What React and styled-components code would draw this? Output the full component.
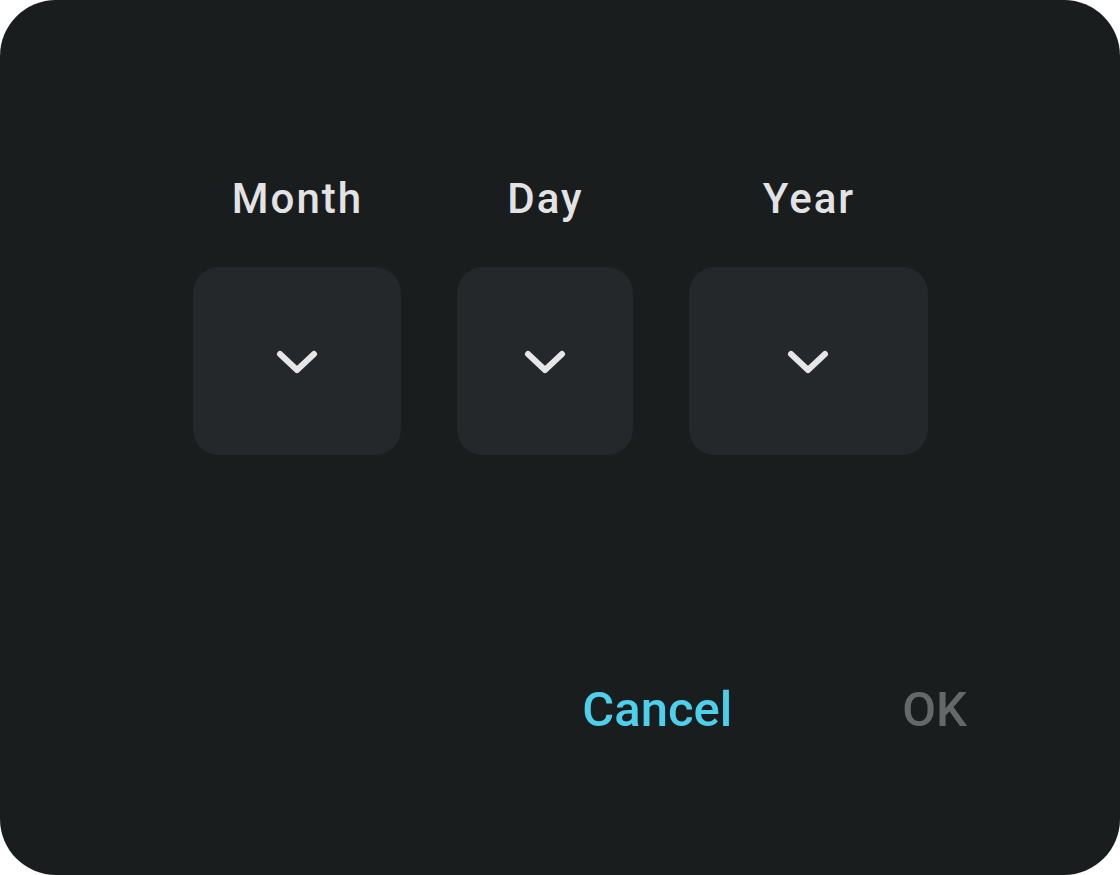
import React from "react";
import styled, { createGlobalStyle } from "styled-components";

const GlobalStyle = createGlobalStyle`
  html, body {
    margin: 0;
    padding: 0;
    background: #ffffff;
  }
  body {
    font-family: Roboto, "Liberation Sans", sans-serif;
  }
`;

const Dialog = styled.div`
  width: 1120px;
  height: 875px;
  box-sizing: border-box;
  background: #1a1d1e;
  border-radius: 56px;
  display: flex;
  flex-direction: column;
  padding-top: 173px;
`;

const Pickers = styled.div`
  display: flex;
  justify-content: center;
  gap: 56px;
`;

const Column = styled.div`
  display: flex;
  flex-direction: column;
  align-items: center;
`;

const Label = styled.div`
  font-size: 42px;
  line-height: 52px;
  font-weight: 500;
  letter-spacing: 2px;
  padding-left: 2px;
  color: #e3e3e5;
`;

const Select = styled.button`
  width: ${(p) => p.$width}px;
  height: 188px;
  margin-top: 42px;
  border: none;
  border-radius: 26px;
  background: #24282b;
  display: flex;
  align-items: center;
  justify-content: center;
  cursor: pointer;
  padding: 4px 0 0;
`;

const Actions = styled.div`
  margin-top: auto;
  margin-bottom: 137px;
  display: flex;
  justify-content: flex-end;
  padding-right: 153px;
  gap: 170px;
`;

const Action = styled.button`
  border: none;
  background: none;
  padding: 0;
  font-family: inherit;
  font-size: 49px;
  line-height: 56px;
  font-weight: 500;
  color: ${(p) => (p.$disabled ? "#646869" : "#4dd0ec")};
  cursor: pointer;
`;

function Chevron() {
  return (
    <svg width="44" height="30" viewBox="0 0 44 30" fill="none">
      <path
        d="M5 6 L22 22 L39 6"
        stroke="#e6e6e8"
        strokeWidth="6"
        strokeLinecap="round"
        strokeLinejoin="round"
      />
    </svg>
  );
}

const fields = [
  { label: "Month", width: 208 },
  { label: "Day", width: 176 },
  { label: "Year", width: 239 },
];

export default function App() {
  return (
    <>
      <GlobalStyle />
      <Dialog>
        <Pickers>
          {fields.map((f) => (
            <Column key={f.label}>
              <Label>{f.label}</Label>
              <Select $width={f.width}>
                <Chevron />
              </Select>
            </Column>
          ))}
        </Pickers>
        <Actions>
          <Action>Cancel</Action>
          <Action $disabled>OK</Action>
        </Actions>
      </Dialog>
    </>
  );
}
